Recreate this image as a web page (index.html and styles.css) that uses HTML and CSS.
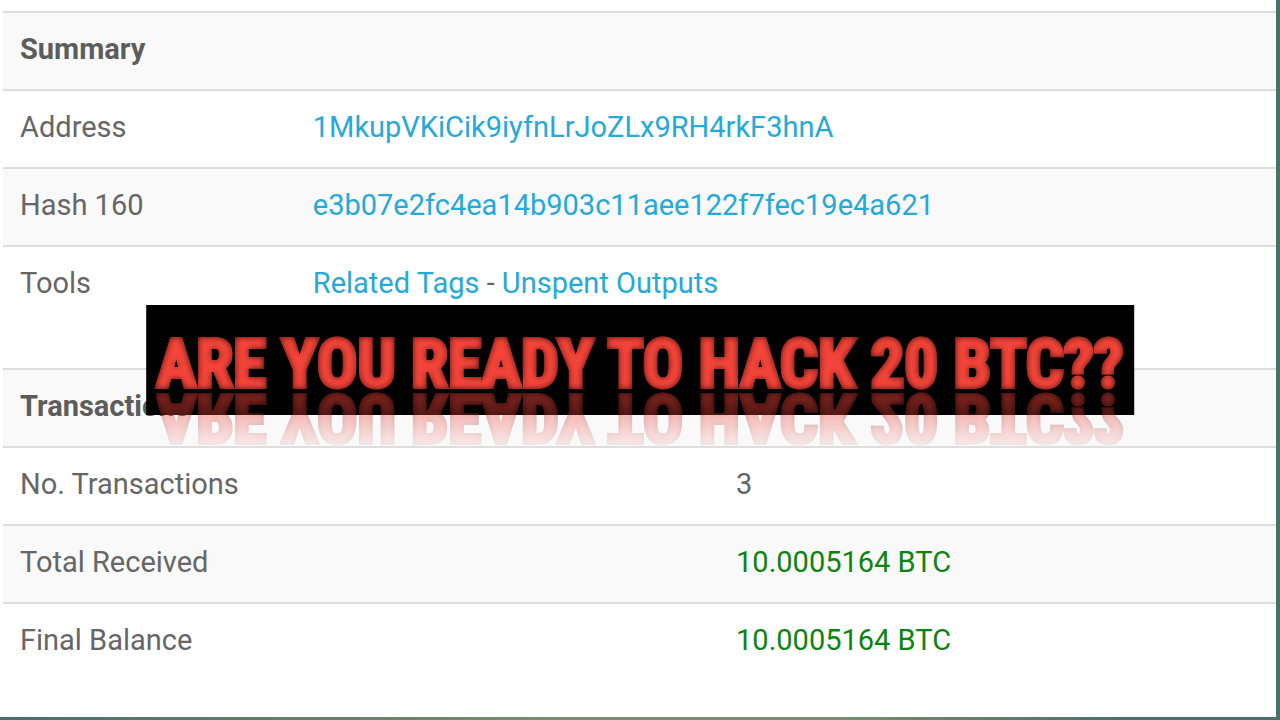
FILE: index.html
```html
<!DOCTYPE html>
<html lang="en">
<head>
<meta charset="utf-8">
<title>Bitcoin Address</title>
<link rel="stylesheet" href="styles.css">
</head>
<body>
<svg class="defs" width="0" height="0" aria-hidden="true">
  <filter id="inner-shade" x="-2%" y="-10%" width="104%" height="120%" color-interpolation-filters="sRGB">
    <feComponentTransfer in="SourceAlpha" result="inverse"><feFuncA type="table" tableValues="1 0"/></feComponentTransfer>
    <feGaussianBlur in="inverse" stdDeviation="3" result="soft"/>
    <feFlood flood-color="#4a0d08"/>
    <feComposite in2="soft" operator="in"/>
    <feComposite in2="SourceAlpha" operator="in" result="shade"/>
    <feMerge><feMergeNode in="SourceGraphic"/><feMergeNode in="shade"/></feMerge>
  </filter>
</svg>
<main class="page">
  <table class="info summary">
    <colgroup><col class="label-col"><col></colgroup>
    <thead><tr><th colspan="2" scope="colgroup">Summary</th></tr></thead>
    <tbody>
      <tr><td>Address</td><td><a href="#">1MkupVKiCik9iyfnLrJoZLx9RH4rkF3hnA</a></td></tr>
      <tr><td>Hash 160</td><td><a href="#">e3b07e2fc4ea14b903c11aee122f7fec19e4a621</a></td></tr>
      <tr class="tools"><td>Tools</td><td><a href="#">Related Tags</a> - <a href="#">Unspent Outputs</a></td></tr>
    </tbody>
  </table>
  <table class="info transactions">
    <colgroup><col class="label-col"><col></colgroup>
    <thead><tr><th colspan="2" scope="colgroup">Transactions</th></tr></thead>
    <tbody>
      <tr><td>No. Transactions</td><td>3</td></tr>
      <tr><td>Total Received</td><td class="amount">10.0005164 BTC</td></tr>
      <tr><td>Final Balance</td><td class="amount">10.0005164 BTC</td></tr>
    </tbody>
  </table>
</main>
<div class="banner"><h1 class="headline">ARE YOU READY TO HACK 20 BTC??</h1></div>
</body>
</html>
```
FILE: styles.css
```css
* { box-sizing: border-box; }
body {
  position: relative;
  margin: 0;
  min-height: 100vh;
  padding: 0 4px 3px 0;
  display: flex;
  background: linear-gradient(90deg, #47706a, #7b8f6e 45%, #7b8f6e 65%, #48716a 88%);
  font-family: Roboto, "Liberation Sans", sans-serif;
  font-size: 29px;
  line-height: 34px;
  color: #666;
}
.defs { position: absolute; }
.page {
  flex: 1;
  padding: 11px 0 0 3px;
  background: #fff;
}
.info {
  width: 100%;
  border-collapse: separate;
  border-spacing: 0;
  table-layout: fixed;
}
.info th, .info td {
  padding: 19px 17px 23px;
  border-top: 2px solid #dedede;
  text-align: left;
  vertical-align: top;
}
.info th { font-weight: 700; color: #5c5c5c; background: #f9f9f9; }
.info tbody tr:nth-child(even) { background: #f9f9f9; }
.summary .label-col { width: 23%; }
.transactions .label-col { width: 56.25%; }
.info .tools td { padding-bottom: 68px; }
.info a { color: #25a9d8; text-decoration: none; }
.info .amount { color: #0c8410; }
.banner {
  position: absolute;
  top: 305px;
  left: 50%;
  transform: translateX(-50%);
  height: 110px;
  padding: 27px 10px 0;
  background: #000;
}
.headline {
  margin: 0;
  font-family: Impact, "Roboto Condensed", "DejaVu Sans Condensed", sans-serif;
  font-size: 67px;
  font-weight: 700;
  line-height: 64px;
  white-space: nowrap;
  color: #f5453a;
  -webkit-text-stroke: 4px #f5453a;
  filter: url(#inner-shade);
  -webkit-box-reflect: below -10px linear-gradient(rgba(0, 0, 0, 0.04), rgba(0, 0, 0, 0.6));
}
```
